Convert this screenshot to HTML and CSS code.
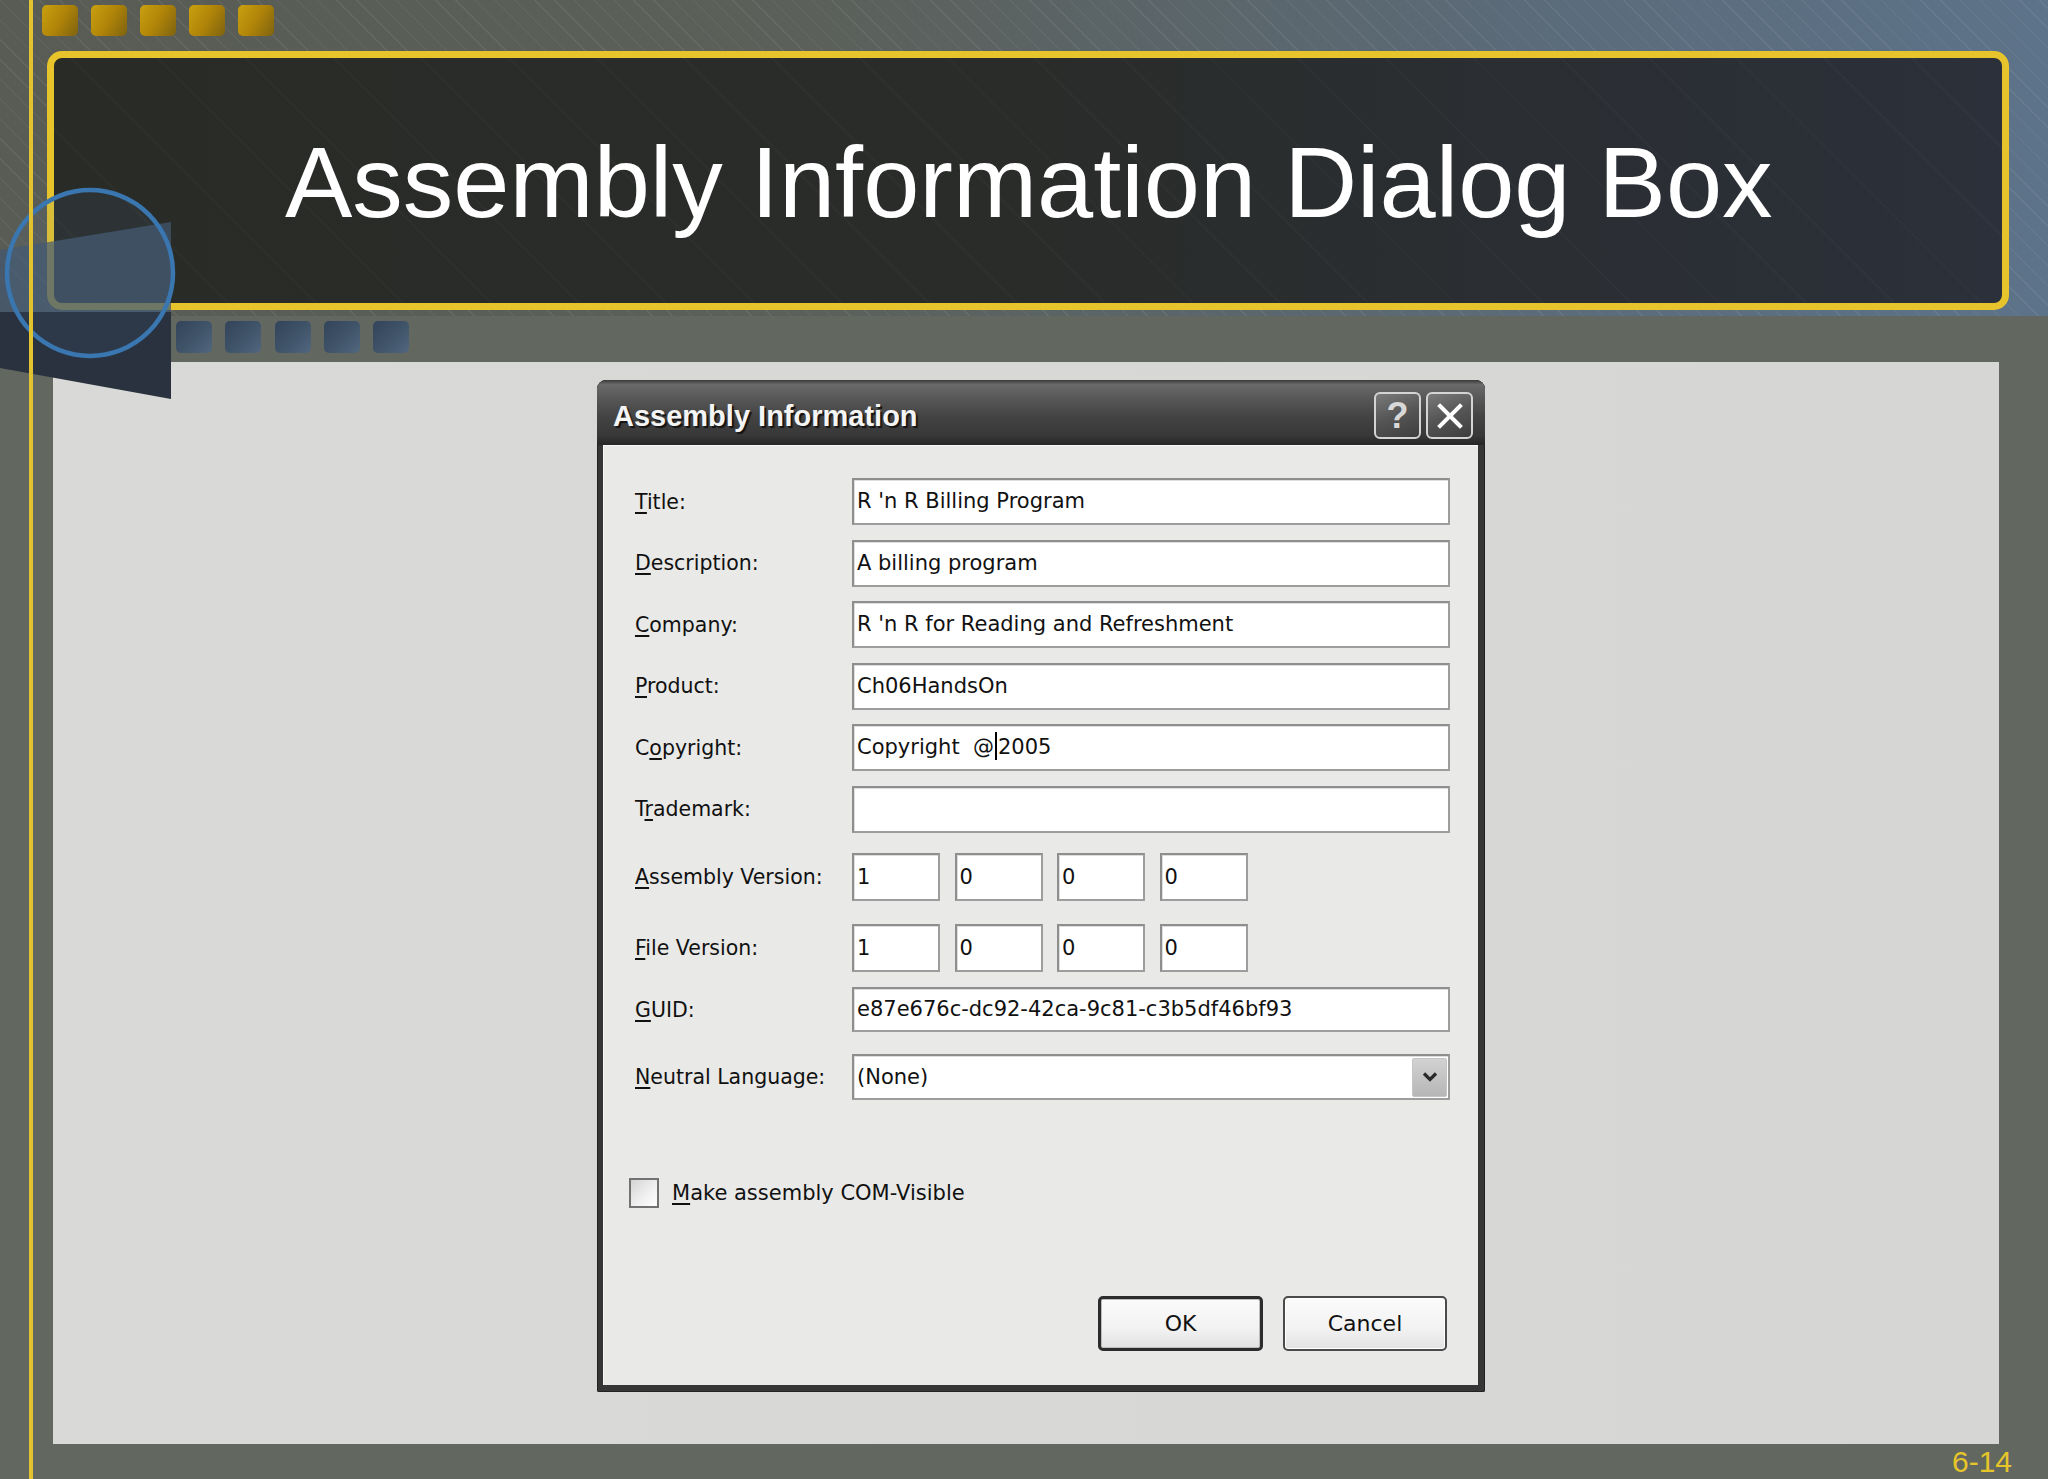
FILE: index.html
```html
<!DOCTYPE html>
<html>
<head>
<meta charset="utf-8">
<title>Assembly Information Dialog Box</title>
<link rel="stylesheet" href="styles.css">
</head>
<body>
<div class="slide">
  <header class="band">
    <div class="gold-row">
      <span class="gsq"></span><span class="gsq"></span><span class="gsq"></span><span class="gsq"></span><span class="gsq"></span>
    </div>
    <div class="title-box">
      <h1>Assembly Information Dialog Box</h1>
    </div>
  </header>
  <div class="blue-row">
    <span class="bsq"></span><span class="bsq"></span><span class="bsq"></span><span class="bsq"></span><span class="bsq"></span>
  </div>

  <main class="panel">
    <div class="dialog">
      <div class="dlg-titlebar">
        <span class="dlg-title">Assembly Information</span>
        <div class="tb-btns">
          <span class="tb-btn tb-help">?</span>
          <span class="tb-btn tb-close">
            <svg width="26" height="26" viewBox="0 0 26 26"><path d="M3 3 L23 23 M23 3 L3 23" stroke="#fff" stroke-width="4" stroke-linecap="square"/></svg>
          </span>
        </div>
      </div>
      <div class="dlg-body">
        <div class="field f-first"><span class="lbl"><u>T</u>itle:</span><div class="tbox">R 'n R Billing Program</div></div>
        <div class="field"><span class="lbl"><u>D</u>escription:</span><div class="tbox">A billing program</div></div>
        <div class="field"><span class="lbl"><u>C</u>ompany:</span><div class="tbox">R 'n R for Reading and Refreshment</div></div>
        <div class="field"><span class="lbl"><u>P</u>roduct:</span><div class="tbox">Ch06HandsOn</div></div>
        <div class="field"><span class="lbl">C<u>o</u>pyright:</span><div class="tbox">Copyright&nbsp;&nbsp;@<span class="caret"></span>2005</div></div>
        <div class="field"><span class="lbl">T<u>r</u>ademark:</span><div class="tbox"></div></div>
        <div class="field f-ver"><span class="lbl"><u>A</u>ssembly Version:</span>
          <div class="vgroup"><div class="vbox">1</div><div class="vbox">0</div><div class="vbox">0</div><div class="vbox">0</div></div>
        </div>
        <div class="field f-file"><span class="lbl"><u>F</u>ile Version:</span>
          <div class="vgroup"><div class="vbox">1</div><div class="vbox">0</div><div class="vbox">0</div><div class="vbox">0</div></div>
        </div>
        <div class="field f-guid"><span class="lbl"><u>G</u>UID:</span><div class="tbox tb-guid">e87e676c-dc92-42ca-9c81-c3b5df46bf93</div></div>
        <div class="field f-lang"><span class="lbl"><u>N</u>eutral Language:</span>
          <div class="tbox combo"><span>(None)</span>
            <span class="drop"><svg width="16" height="12" viewBox="0 0 16 12"><path d="M2 2.5 L8 8.5 L14 2.5" fill="none" stroke="#2a2a2a" stroke-width="3.2"/></svg></span>
          </div>
        </div>
        <div class="check-row"><span class="chk"></span><span class="chk-text"><u>M</u>ake assembly COM-Visible</span></div>
        <div class="btn-row">
          <span class="btn btn-default">OK</span>
          <span class="btn">Cancel</span>
        </div>
      </div>
    </div>
  </main>

  <footer class="foot"><span class="pgnum">6-14</span></footer>

  <svg class="deco" width="180" height="410" viewBox="0 0 180 410">
    <polygon points="0,250 171,222 171,312 0,312" fill="rgba(66,88,112,0.72)"/>
    <polygon points="0,312 171,312 171,399 0,368" fill="#29323e"/>
    <circle cx="90" cy="273" r="83" fill="rgba(90,130,170,0.10)" stroke="#3a76b0" stroke-width="4.5"/>
  </svg>
  <div class="vline"></div>
</div>
</body>
</html>
```

FILE: styles.css
```css
* { box-sizing: border-box; }

html, body {
  margin: 0;
  padding: 0;
}

body {
  width: 2048px;
  height: 1479px;
  overflow: hidden;
  background: #61665f;
  font-family: "Liberation Sans", Arial, sans-serif;
}

.slide {
  position: relative;
  width: 2048px;
  height: 1479px;
  background: #62675f;
  overflow: hidden;
}

/* ---------- top band ---------- */
.band {
  height: 316px;
  padding: 5px 0 0 42px;
  background:
    repeating-linear-gradient(45deg, rgba(255,255,255,0) 0 13px, rgba(255,255,255,0.07) 13px 14px),
    linear-gradient(90deg, #585c54 0%, #5b605a 40%, #5b6c7c 78%, #5d7389 100%);
}

.gold-row {
  display: flex;
  gap: 13px;
  height: 31px;
}

.gsq {
  width: 36px;
  height: 31px;
  border-radius: 5px;
  background: linear-gradient(120deg, #caa010 0%, #b08408 50%, #7d6210 100%);
}

.title-box {
  margin: 15px 0 0 5px;
  width: 1962px;
  height: 259px;
  border: 7px solid #e7c42c;
  border-radius: 15px;
  background:
    repeating-linear-gradient(45deg, rgba(255,255,255,0) 0 60px, rgba(255,255,255,0.018) 60px 62px),
    linear-gradient(90deg, #292b27 0%, #2a2c2a 50%, #2b303a 100%);
  padding: 66px 0 0 231px;
}

.title-box h1 {
  margin: 0;
  font-family: "Liberation Sans", Arial, sans-serif;
  font-weight: normal;
  font-size: 101px;
  line-height: 117px;
  color: #ffffff;
  white-space: nowrap;
}

.blue-row {
  display: flex;
  gap: 13.25px;
  height: 32px;
  margin: 5px 0 0 176px;
}

.bsq {
  width: 36px;
  height: 32px;
  border-radius: 5px;
  background: linear-gradient(135deg, #32445a 0%, #40546a 55%, #52687e 100%);
}

/* ---------- content panel ---------- */
.panel {
  margin: 9px 0 0 53px;
  width: 1946px;
  height: 1082px;
  background: linear-gradient(90deg, #d9dad7 0%, #d6d7d4 100%);
  padding: 18px 0 0 544px;
}

/* ---------- dialog ---------- */
.dialog {
  width: 888px;
  height: 1012px;
  background: #363636;
  border-radius: 9px 9px 2px 2px;
  display: flex;
  flex-direction: column;
  box-shadow: inset 0 0 0 1px #222;
}

.dlg-titlebar {
  height: 65px;
  flex: none;
  padding: 6px 12px 0 16px;
  display: flex;
  align-items: center;
  justify-content: space-between;
  border-radius: 9px 9px 0 0;
  background: linear-gradient(180deg, #3a3a3a 0%, #6a6a6a 7%, #5a5a5a 25%, #444 55%, #383838 85%, #262626 100%);
}

.dlg-title {
  font-family: "Liberation Sans", Arial, sans-serif;
  font-weight: bold;
  font-size: 29px;
  color: #f4f4f4;
  text-shadow: 2px 2px 1px #141414;
  padding-top: 2px;
}

.tb-btns {
  display: flex;
  gap: 5px;
}

.tb-btn {
  width: 47px;
  height: 47px;
  border: 2px solid #d4d4d4;
  border-radius: 6px;
  background: linear-gradient(160deg, #7a7a7a 0%, #555 50%, #3e3e3e 100%);
  display: flex;
  align-items: center;
  justify-content: center;
}

.tb-help {
  font-family: "Liberation Sans", Arial, sans-serif;
  font-weight: bold;
  font-size: 36px;
  color: #d8d8d8;
  line-height: 1;
}

.dlg-body {
  flex: 1;
  margin: 0 7px 7px 6px;
  background: #e9e9e7;
  box-shadow: inset 1px 1px 0 #f8f8f8;
  padding: 33px 28px 34px 32px;
  display: flex;
  flex-direction: column;
  font-family: "DejaVu Sans", Verdana, sans-serif;
  color: #111;
}

.field {
  display: flex;
  align-items: center;
  margin-top: 14.5px;
  flex: none;
}

.field.f-first { margin-top: 0; }
.field.f-ver { margin-top: 20.5px; }
.field.f-file { margin-top: 23px; }
.field.f-guid { margin-top: 15px; }
.field.f-lang { margin-top: 22px; }

.lbl {
  width: 217px;
  flex: none;
  font-size: 20.5px;
  white-space: nowrap;
}

.lbl u, .chk-text u {
  text-underline-offset: 3px;
  text-decoration-thickness: 2px;
}

.tbox {
  width: 598px;
  height: 47px;
  background: #fff;
  border: 2px solid #9d9d9d;
  border-top-color: #8e8e8e;
  border-left-color: #8e8e8e;
  box-shadow: inset 1px 1px 0 #dedede;
  font-size: 21px;
  line-height: 43px;
  padding-left: 3px;
  white-space: nowrap;
  overflow: hidden;
}

.tb-guid { height: 45px; line-height: 41px; }

.caret {
  display: inline-block;
  width: 2px;
  height: 28px;
  background: #000;
  vertical-align: middle;
  margin: -4px 1px 0 1px;
}

.vgroup {
  display: flex;
  gap: 14.5px;
}

.vbox {
  width: 88px;
  height: 48px;
  background: #fff;
  border: 2px solid #9d9d9d;
  border-top-color: #8e8e8e;
  border-left-color: #8e8e8e;
  box-shadow: inset 1px 1px 0 #dedede;
  font-size: 21px;
  line-height: 44px;
  padding-left: 3px;
}

.combo {
  height: 46px;
  line-height: 42px;
  display: flex;
  align-items: center;
  justify-content: space-between;
  padding-right: 1px;
}

.drop {
  width: 35px;
  height: 39px;
  border: 1px solid #c4c4c4;
  border-radius: 2px;
  background: linear-gradient(180deg, #d2d2d2 0%, #b6b6b6 100%);
  display: flex;
  align-items: center;
  justify-content: center;
}

.check-row {
  display: flex;
  align-items: center;
  margin: 78px 0 0 -6px;
  height: 30px;
  flex: none;
}

.chk {
  width: 30px;
  height: 30px;
  border: 2px solid #727272;
  background: linear-gradient(135deg, #d4d4d4 0%, #efefef 55%, #ffffff 100%);
  flex: none;
}

.chk-text {
  margin-left: 13px;
  font-size: 21px;
  white-space: nowrap;
}

.btn-row {
  margin-top: auto;
  display: flex;
  justify-content: flex-end;
  gap: 20px;
  padding-right: 3px;
  flex: none;
}

.btn {
  width: 164px;
  height: 55px;
  border: 2px solid #4a4a4a;
  border-radius: 5px;
  background: linear-gradient(180deg, #fbfbfb 0%, #f2f2f2 60%, #e2e2e2 100%);
  box-shadow: inset 0 0 0 1px #ffffff;
  display: flex;
  align-items: center;
  justify-content: center;
  font-size: 22px;
  color: #111;
}

.btn-default {
  width: 165px;
  border: 3px solid #2c2c2c;
  box-shadow: inset 0 0 0 1px #bdbdbd;
}

/* ---------- footer ---------- */
.foot {
  height: 35px;
  padding: 3px 36px 0 0;
  display: flex;
  justify-content: flex-end;
}

.pgnum {
  font-family: "Liberation Sans", Arial, sans-serif;
  font-size: 30px;
  line-height: 30px;
  color: #e6c52a;
}

/* ---------- overlay decorations ---------- */
.deco {
  position: absolute;
  left: 0;
  top: 0;
}

.vline {
  position: absolute;
  left: 29px;
  top: 0;
  width: 4px;
  height: 1479px;
  background: #e3c230;
}
```
